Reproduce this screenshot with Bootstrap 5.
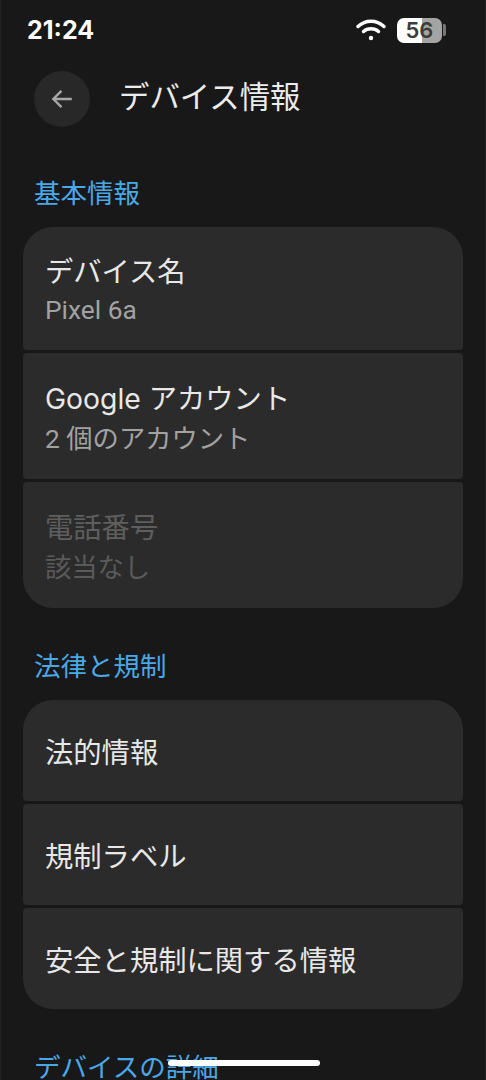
<!DOCTYPE html>
<html lang="ja">
<head>
<meta charset="utf-8">
<meta name="viewport" content="width=device-width, initial-scale=1">
<link href="https://cdn.jsdelivr.net/npm/bootstrap@5.3.0/dist/css/bootstrap.min.css" rel="stylesheet">
<style>
html,body{height:1080px;overflow:hidden;background:#181818;}
body{font-family:"Inter","Noto Sans CJK JP",sans-serif;color:#e6e6e6;}
.phone{height:1080px;overflow:hidden;position:relative;padding:0 22px;background:#181818;border-left:1px solid #222;border-right:1px solid #222;}
.statusbar{height:60px;margin:0 -22px;padding:0 39px 0 26px;}
.clock{font-size:25px;font-weight:700;color:#fff;line-height:1;}
.batt{width:45px;height:25px;border-radius:7px;background:linear-gradient(90deg,#fff 0,#fff 56%,#a4a4a4 56%,#a4a4a4 100%);color:#3c3c3c;font-size:22px;font-weight:600;line-height:25px;text-align:center;}
.battcap{width:3px;height:12px;background:#777;border-radius:0 2px 2px 0;margin-left:1px;}
.wifi{margin-right:11px;}
.topbar{height:56px;margin:11px 0 0 11px;gap:29px;}
.backbtn{width:56px;height:56px;border-radius:50%;background:#282828;}
.pagetitle{font-size:30.400px;color:#ececec;font-weight:400;line-height:1;margin:0 0 3px;}
.sect{color:#4aa8e8;font-size:26.500px;line-height:28px;margin:44px 0 0 11px;font-weight:400;}
.sect-first{margin-top:52px;}
.grp{display:flex;flex-direction:column;gap:3px;margin-top:20px;}
.itm{background:#2b2b2b;border-radius:4px;padding:0 22px;display:flex;flex-direction:column;}
.itm:first-child{border-radius:30px 30px 4px 4px;}
.itm:last-child{border-radius:4px 4px 30px 30px;}
.h2l{height:126px;padding-top:27px;}
.h2l:first-child{height:123px;padding-top:26px;}
.h1l{height:101px;justify-content:center;padding-top:4px;}
.ttl{font-size:28.300px;line-height:38px;color:#e8e8e8;}
.sub{font-family:"Roboto","Noto Sans CJK JP",sans-serif;font-size:26.300px;line-height:38px;color:#a2a2a2;margin-top:2px;}
.h2l:first-child .sub{margin-top:0;}
.off .ttl{color:#5e5e5e;}
.off .sub{color:#5a5a5a;}
.homebar{position:absolute;left:167px;top:1060px;width:152px;height:6px;border-radius:3px;background:#fff;}
</style>
</head>
<body>
<div class="phone">
  <div class="statusbar d-flex align-items-center justify-content-between">
    <span class="clock">21:24</span>
    <div class="d-flex align-items-center">
      <svg width="30" height="24" viewBox="0 0 30 24" class="wifi" fill="none" stroke="#fff" stroke-width="3.4" stroke-linecap="round"><path d="M2 8.500C9.500 1.500 20.500 1.500 28 8.500"/><path d="M7.500 13.500C11.500 9.800 18.500 9.800 22.500 13.500"/><circle cx="15" cy="20" r="2.200" fill="#fff" stroke="none"/></svg>
      <div class="batt">56</div>
      <div class="battcap"></div>
    </div>
  </div>
  <div class="topbar d-flex align-items-center">
    <div class="backbtn d-flex align-items-center justify-content-center">
      <svg width="26" height="26" viewBox="0 0 24 24" fill="none" stroke="#a8a8a8" stroke-width="2.200"><path d="M21 12H4M11.500 4.500L4 12l7.500 7.500"/></svg>
    </div>
    <h1 class="pagetitle">デバイス情報</h1>
  </div>
  <h2 class="sect sect-first">基本情報</h2>
  <div class="grp">
    <div class="itm h2l"><div class="ttl">デバイス名</div><div class="sub">Pixel 6a</div></div>
    <div class="itm h2l"><div class="ttl">Google アカウント</div><div class="sub">2 個のアカウント</div></div>
    <div class="itm h2l off"><div class="ttl">電話番号</div><div class="sub">該当なし</div></div>
  </div>
  <h2 class="sect">法律と規制</h2>
  <div class="grp">
    <div class="itm h1l"><div class="ttl">法的情報</div></div>
    <div class="itm h1l"><div class="ttl">規制ラベル</div></div>
    <div class="itm h1l"><div class="ttl">安全と規制に関する情報</div></div>
  </div>
  <h2 class="sect">デバイスの詳細</h2>
  <div class="homebar"></div>
</div>
<script src="https://cdn.jsdelivr.net/npm/bootstrap@5.3.0/dist/js/bootstrap.bundle.min.js"></script>
</body>
</html>
